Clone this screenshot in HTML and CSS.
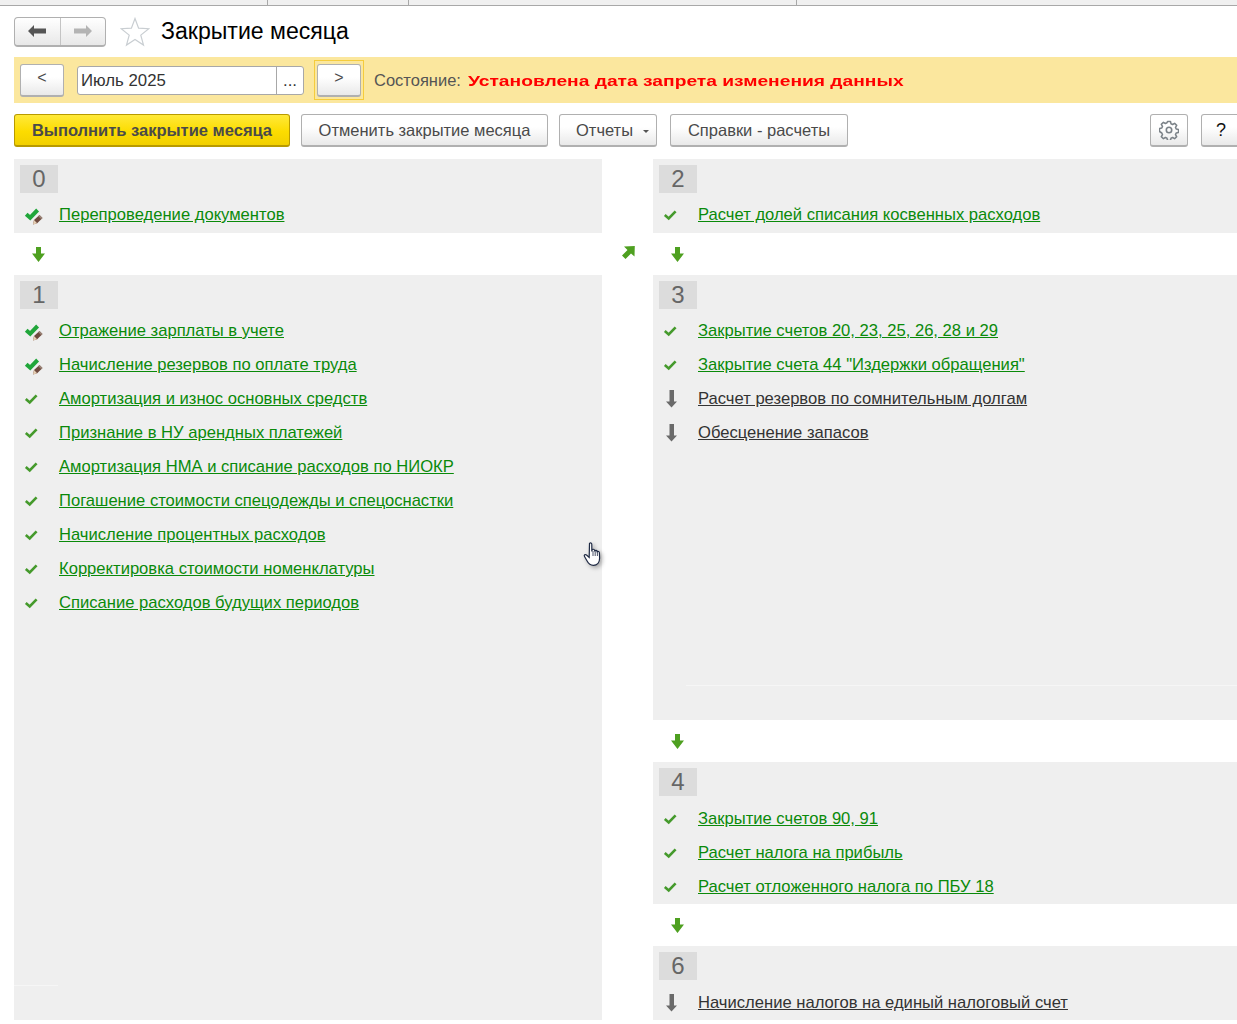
FILE: index.html
```html
<!DOCTYPE html>
<html lang="ru">
<head>
<meta charset="utf-8">
<title>Закрытие месяца</title>
<link rel="stylesheet" href="styles.css">
</head>
<body>
<svg class="defs" width="0" height="0" aria-hidden="true">
  <symbol id="check" viewBox="0 0 24 24"><path d="M5.800 13l3.900 3.400 6.900-7.100" fill="none" stroke="#459a2c" stroke-width="2.600"/></symbol>
  <symbol id="checkpen" viewBox="0 0 24 24">
    <path d="M6.200 12.200l4 3.500 7.400-7.700" fill="none" stroke="#20a63a" stroke-width="4"/>
    <path d="M13 22.500l1-4.500 5.500-5 3 3-5.300 5.200z" fill="#6f4a3e"/>
    <path d="M13 22.500l1-4.500 3.200 3.200z" fill="#e6cfb4"/>
    <path d="M19.500 13l3 3-1.200 1.200-3-3z" fill="#9b8478"/>
  </symbol>
  <symbol id="down" viewBox="0 0 24 24"><path d="M10 5h5v6.500h4L12.500 20 6 11.500h4z" fill="#4ea020"/></symbol>
  <symbol id="downgray" viewBox="0 0 24 24"><path d="M10.500 4H15v11.500h3l-5.500 6-5.500-6h3.500z" fill="#6a6a6a"/></symbol>
  <symbol id="diag" viewBox="0 0 24 24"><path d="M8 6.500L18.800 6l-.3 10.500-3.500-3L9.500 19 6 15.500l5.500-5.500z" fill="#4ea020"/></symbol>
</svg>

<div class="tabs">
  <span class="tab t1"></span><span class="tab t2"></span><span class="tab t3"></span>
</div>

<header class="head">
  <div class="navgroup">
    <button class="navbtn"><svg width="18" height="12" viewBox="0 0 18 12"><path d="M0 6l6-6v3.500h12v5H6V12z" fill="#555"/></svg></button>
    <button class="navbtn"><svg width="18" height="12" viewBox="0 0 18 12"><path d="M18 6l-6-6v3.500H0v5h12V12z" fill="#b4b4b4"/></svg></button>
  </div>
  <svg class="star" width="30" height="30" viewBox="0 0 30 30"><path d="M15 1.500l3.600 9.700 10.200.5-8 6.400 2.700 9.900-8.500-5.600-8.500 5.600 2.700-9.900-8-6.400 10.200-.5z" fill="#fff" stroke="#c9ced2" stroke-width="1.200"/></svg>
  <h1 class="title">Закрытие месяца</h1>
</header>

<section class="statebar">
  <button class="btn small">&lt;</button>
  <div class="period"><span class="period-val">Июль 2025</span><span class="period-pick">...</span></div>
  <div class="focus"><button class="btn small">&gt;</button></div>
  <span class="state-label">Состояние:</span>
  <span class="state-value">Установлена дата запрета изменения данных</span>
</section>

<nav class="toolbar">
  <button class="btn primary">Выполнить закрытие месяца</button>
  <button class="btn cancel">Отменить закрытие месяца</button>
  <button class="btn reports">Отчеты<i class="caret"></i></button>
  <button class="btn refs">Справки - расчеты</button>
  <button class="btn gear"><svg width="20" height="20" viewBox="0 0 20 20"><path d="M8.500 1.500h3l.5 2.300 1.600.7 2-1.200 2.100 2.100-1.200 2 .7 1.600 2.300.5v3l-2.300.5-.7 1.600 1.200 2-2.100 2.100-2-1.200-1.600.7-.5 2.300h-3l-.5-2.300-1.600-.7-2 1.200-2.100-2.100 1.200-2-.7-1.600L.5 11.500v-3l2.300-.5.700-1.600-1.200-2 2.100-2.100 2 1.200 1.600-.7z" fill="none" stroke="#7b8288" stroke-width="1.500" stroke-linejoin="round"/><circle cx="10" cy="10" r="2.700" fill="none" stroke="#7b8288" stroke-width="1.600"/></svg></button>
  <button class="btn help">?</button>
</nav>

<main class="board">
  <div class="col">
    <section class="panel">
      <div class="num">0</div>
      <div class="row"><svg class="ico"><use href="#checkpen"/></svg><a class="lnk" href="#">Перепроведение документов</a></div>
    </section>
    <div class="gap"><svg class="ico"><use href="#down"/></svg></div>
    <section class="panel grow">
      <div class="num">1</div>
      <div class="row"><svg class="ico"><use href="#checkpen"/></svg><a class="lnk" href="#">Отражение зарплаты в учете</a></div>
      <div class="row"><svg class="ico"><use href="#checkpen"/></svg><a class="lnk" href="#">Начисление резервов по оплате труда</a></div>
      <div class="row"><svg class="ico"><use href="#check"/></svg><a class="lnk" href="#">Амортизация и износ основных средств</a></div>
      <div class="row"><svg class="ico"><use href="#check"/></svg><a class="lnk" href="#">Признание в НУ арендных платежей</a></div>
      <div class="row"><svg class="ico"><use href="#check"/></svg><a class="lnk" href="#">Амортизация НМА и списание расходов по НИОКР</a></div>
      <div class="row"><svg class="ico"><use href="#check"/></svg><a class="lnk" href="#">Погашение стоимости спецодежды и спецоснастки</a></div>
      <div class="row"><svg class="ico"><use href="#check"/></svg><a class="lnk" href="#">Начисление процентных расходов</a></div>
      <div class="row"><svg class="ico"><use href="#check"/></svg><a class="lnk" href="#">Корректировка стоимости номенклатуры</a></div>
      <div class="row"><svg class="ico"><use href="#check"/></svg><a class="lnk" href="#">Списание расходов будущих периодов</a></div>
      <div class="faint left"></div>
    </section>
  </div>

  <div class="mid"><svg class="ico"><use href="#diag"/></svg></div>

  <div class="col">
    <section class="panel">
      <div class="num">2</div>
      <div class="row"><svg class="ico"><use href="#check"/></svg><a class="lnk" href="#">Расчет долей списания косвенных расходов</a></div>
    </section>
    <div class="gap"><svg class="ico"><use href="#down"/></svg></div>
    <section class="panel p3">
      <div class="num">3</div>
      <div class="row"><svg class="ico"><use href="#check"/></svg><a class="lnk" href="#">Закрытие счетов 20, 23, 25, 26, 28 и 29</a></div>
      <div class="row"><svg class="ico"><use href="#check"/></svg><a class="lnk" href="#">Закрытие счета 44 "Издержки обращения"</a></div>
      <div class="row"><svg class="ico"><use href="#downgray"/></svg><a class="lnk todo" href="#">Расчет резервов по сомнительным долгам</a></div>
      <div class="row"><svg class="ico"><use href="#downgray"/></svg><a class="lnk todo" href="#">Обесценение запасов</a></div>
      <div class="faint right"></div>
    </section>
    <div class="gap"><svg class="ico"><use href="#down"/></svg></div>
    <section class="panel tall">
      <div class="num">4</div>
      <div class="row"><svg class="ico"><use href="#check"/></svg><a class="lnk" href="#">Закрытие счетов 90, 91</a></div>
      <div class="row"><svg class="ico"><use href="#check"/></svg><a class="lnk" href="#">Расчет налога на прибыль</a></div>
      <div class="row"><svg class="ico"><use href="#check"/></svg><a class="lnk" href="#">Расчет отложенного налога по ПБУ 18</a></div>
    </section>
    <div class="gap"><svg class="ico"><use href="#down"/></svg></div>
    <section class="panel tall">
      <div class="num">6</div>
      <div class="row"><svg class="ico"><use href="#downgray"/></svg><a class="lnk todo" href="#">Начисление налогов на единый налоговый счет</a></div>
    </section>
  </div>
</main>

<svg class="cursor" width="20" height="28" viewBox="0 0 20 28">
  <path d="M6.500 2.500c1-1 2.300-.5 2.300 1v7l.4-2c1.500-.6 2.400 0 2.500 1.200.9-.7 2.200-.4 2.400.9 1-.5 2.200 0 2.300 1.200l.2 5.500c0 4-2.400 7-6.200 7-3.400 0-5-1.800-6.300-4.300L1.500 15.500c-.8-1.400.7-2.600 2-1.500l2.700 2.400z" fill="#fff" stroke="#1f2a44" stroke-width="1.200"/>
  <path d="M10 10v5M12.200 10v5M14.400 11v4" stroke="#1f2a44" stroke-width=".8"/>
</svg>
</body>
</html>
```
FILE: styles.css
```css
* { box-sizing: border-box; }
html, body { margin: 0; padding: 0; }
body {
  position: relative;
  width: 1237px;
  height: 1024px;
  overflow: hidden;
  background: #fff;
  font-family: "Liberation Sans", Arial, sans-serif;
  font-size: 16.5px;
  color: #444;
}
.defs { position: absolute; }

.tabs {
  position: relative;
  height: 6px;
  background: #f0f0f0;
  border-bottom: 1px solid #a8a8a8;
}
.tab { position: absolute; top: 0; width: 1px; height: 5px; background: #a8a8a8; }
.t1 { left: 267px; }
.t2 { left: 408px; }
.t3 { left: 796px; }

.head {
  display: flex;
  align-items: center;
  height: 51px;
  padding: 0 0 0 14px;
}
.navgroup {
  display: flex;
  width: 92px;
  height: 30px;
  border: 1px solid #b0b0b0;
  border-bottom-width: 2px;
  border-radius: 4px;
  overflow: hidden;
  background: linear-gradient(#fff, #e8e8e8);
}
.navbtn {
  flex: 1;
  display: flex;
  align-items: center;
  justify-content: center;
  padding: 0;
  border: 0;
  background: none;
}
.navbtn + .navbtn { border-left: 1px solid #c4c4c4; }
.star { margin-left: 14px; }
.title {
  margin: 0 0 0 11px;
  font-size: 23.100px;
  font-weight: 400;
  color: #000;
}

.statebar {
  display: flex;
  align-items: center;
  height: 46px;
  margin-left: 14px;
  padding-left: 6px;
  background: #fbe79e;
}
.btn {
  flex: none;
  height: 33px;
  padding: 1px 0 0;
  border: 1px solid #b0b0b0;
  border-bottom-width: 2px;
  border-radius: 3px;
  background: linear-gradient(#fff 40%, #e9e9e9);
  font: inherit;
  color: #4a4a4a;
  white-space: nowrap;
}
.small { width: 44px; font-size: 16px; padding: 0 0 3px; }
.period {
  display: flex;
  width: 227px;
  height: 29px;
  margin-left: 13px;
  border: 1px solid #a8a8a8;
  border-radius: 3px;
  background: #fff;
  font-size: 16.800px;
  line-height: 27px;
}
.period-val { flex: 1; padding-left: 3px; color: #333; }
.period-pick {
  width: 27px;
  border-left: 1px solid #a8a8a8;
  text-align: center;
  color: #333;
}
.focus {
  display: flex;
  align-items: center;
  justify-content: center;
  width: 50px;
  height: 40px;
  margin-left: 10px;
  border: 1px solid #f5cc3c;
}
.state-label { margin-left: 10px; color: #555; }
.state-value {
  display: inline-block;
  margin: 2px 0 0 7px;
  font-size: 15.500px;
  font-weight: 700;
  color: #f00;
  white-space: nowrap;
  transform: scaleX(1.24);
  transform-origin: left center;
}

.toolbar {
  display: flex;
  align-items: center;
  height: 33px;
  margin: 11px 0 0 14px;
}
.primary {
  width: 276px;
  border-color: #b89a00;
  background: linear-gradient(#ffe93a, #fcdc00 55%, #f2d000);
  font-weight: 700;
}
.cancel { width: 247px; margin-left: 11px; }
.reports { width: 98px; margin-left: 11px; padding-left: 16px; text-align: left; }
.refs { width: 178px; margin-left: 13px; }
.gear {
  display: flex;
  align-items: center;
  justify-content: center;
  width: 38px;
  margin-left: 302px;
  padding: 0;
}
.help { width: 40px; margin-left: 13px; font-size: 18px; color: #111; }
.caret {
  display: inline-block;
  margin-left: 10px;
  vertical-align: middle;
  border: 3px solid transparent;
  border-top-color: #555;
  border-bottom-width: 0;
}

.board {
  display: grid;
  grid-template-columns: 588px 51px 584px;
  height: 861px;
  margin: 12px 0 0 14px;
}
.col { display: flex; flex-direction: column; }
.mid { display: flex; justify-content: center; padding-top: 81px; }
.panel {
  display: flex;
  flex-direction: column;
  padding: 6px 0 2px;
  background: #efefef;
}
.grow { flex: 1; }
.p3 { height: 445px; }
.tall { padding-bottom: 1px; }
.num {
  width: 38px;
  height: 28px;
  margin: 0 0 4px 6px;
  background: #dcdcdc;
  font-size: 24px;
  line-height: 28px;
  text-align: center;
  color: #666;
}
.tall .num { margin-bottom: 5px; }
.row {
  display: flex;
  align-items: center;
  gap: 15px;
  height: 34px;
  padding-left: 6px;
}
.ico { display: block; flex: none; width: 24px; height: 24px; }
.lnk { margin-top: 2px; color: #0a8a0a; font-size: 16.600px; text-decoration: underline; }
.todo { color: #333; }
.gap {
  display: flex;
  align-items: center;
  height: 42px;
  padding-left: 12px;
}
.faint { height: 1px; margin-top: auto; background: #f6f6f6; }
.left { width: 44px; margin-bottom: 32px; }
.right { margin-left: 33px; margin-bottom: 32px; }

.cursor { position: absolute; left: 583px; top: 541px; filter: drop-shadow(2px 2px 2px rgba(0,0,0,.3)); }
```
